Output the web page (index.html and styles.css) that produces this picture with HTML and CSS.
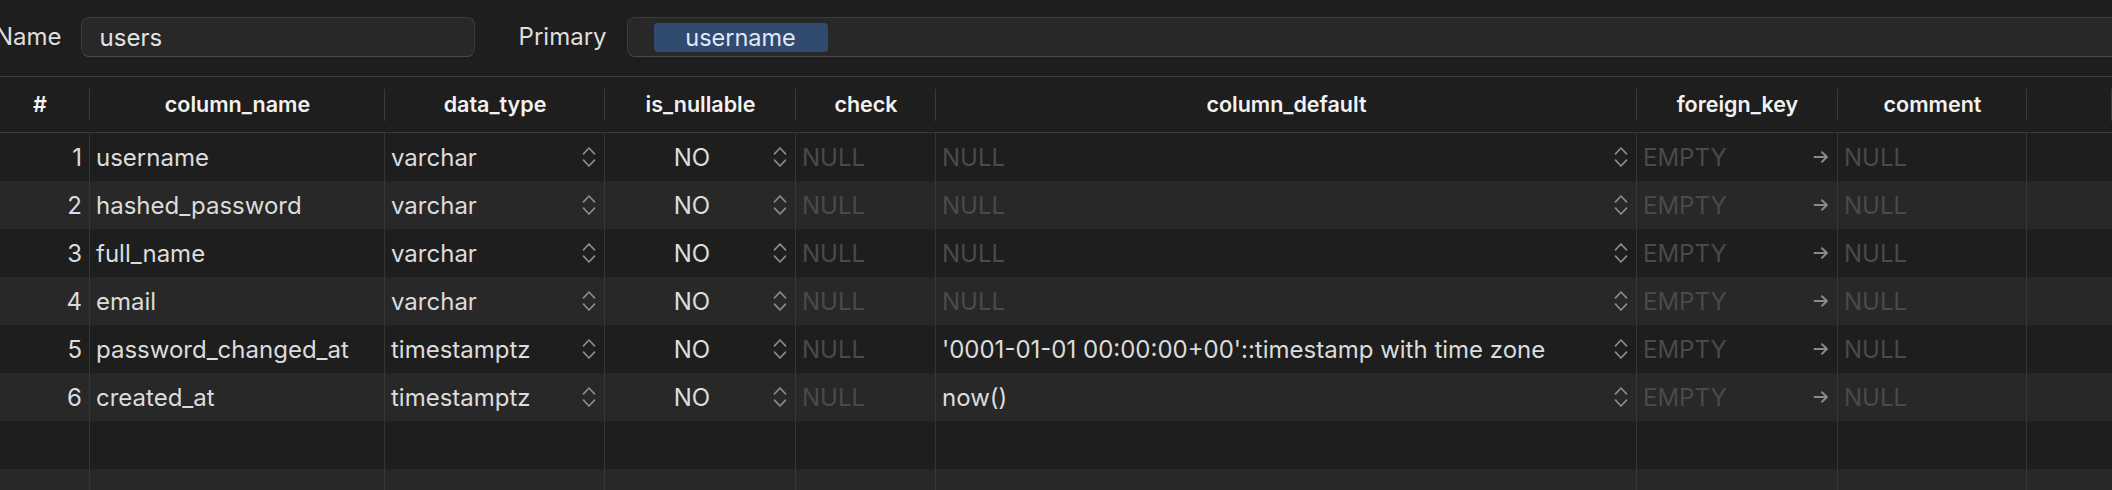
FILE: index.html
```html
<!DOCTYPE html>
<html>
<head>
<meta charset="utf-8">
<link rel="stylesheet" href="styles.css">
</head>
<body>
<div class="topbar">
  <span class="label name-label">Name</span>
  <div class="field name-field">users</div>
  <span class="label primary-label">Primary</span>
  <div class="field primary-field"><span class="chip">username</span></div>
</div>
<div class="grid head">
  <div class="hc hnum">#</div>
  <div class="hc">column_name</div>
  <div class="hc">data_type</div>
  <div class="hc">is_nullable</div>
  <div class="hc">check</div>
  <div class="hc">column_default</div>
  <div class="hc">foreign_key</div>
  <div class="hc">comment</div>
  <div class="hc last"></div>
</div>
<div id="rows"></div>
<svg width="0" height="0" class="defs">
  <defs>
    <symbol id="updown" viewBox="0 0 14 22">
      <path d="M1.5 7.8 L7 2 L12.5 7.8 M1.5 14.2 L7 20 L12.5 14.2" fill="none" stroke="currentColor" stroke-width="1.7" stroke-linecap="round" stroke-linejoin="round"/>
    </symbol>
    <symbol id="arrow" viewBox="0 0 16 14">
      <path d="M1.5 7 H14 M9 2.2 L14 7 L9 11.8" fill="none" stroke="currentColor" stroke-width="1.9" stroke-linecap="round" stroke-linejoin="round"/>
    </symbol>
  </defs>
</svg>
<script src="app.js"></script>
</body>
</html>
```
FILE: app.js
```js
const data = [
  ["username", "varchar", null],
  ["hashed_password", "varchar", null],
  ["full_name", "varchar", null],
  ["email", "varchar", null],
  ["password_changed_at", "timestamptz", "'0001-01-01 00:00:00+00'::timestamp with time zone"],
  ["created_at", "timestamptz", "now()"]
];
const ud = '<svg class="ud"><use href="#updown"/></svg>';
const ar = '<svg class="ar"><use href="#arrow"/></svg>';
let html = '';
data.forEach((r, i) => {
  const def = r[2] === null ? '<span class="txt ph">NULL</span>' : '<span class="txt">' + r[2].replace(/&/g,'&amp;') + '</span>';
  html += '<div class="grid row">' +
    '<div class="c num">' + (i + 1) + '</div>' +
    '<div class="c"><span class="txt">' + r[0] + '</span></div>' +
    '<div class="c"><span class="txt">' + r[1] + '</span>' + ud + '</div>' +
    '<div class="c"><span class="txt center">NO</span>' + ud + '</div>' +
    '<div class="c"><span class="txt ph">NULL</span></div>' +
    '<div class="c">' + def + ud + '</div>' +
    '<div class="c"><span class="txt ph">EMPTY</span>' + ar + '</div>' +
    '<div class="c"><span class="txt ph">NULL</span></div>' +
    '<div class="c last"></div>' +
    '</div>';
});
for (let k = 0; k < 2; k++) {
  html += '<div class="grid row">' + '<div class="c"></div>'.repeat(8) + '<div class="c last"></div></div>';
}
document.getElementById('rows').innerHTML = html;
```
FILE: styles.css
```css
* { box-sizing: border-box; }
html, body {
  margin: 0;
  padding: 0;
  background: #1e1e1e;
  width: 2112px;
  height: 490px;
  overflow: hidden;
}
body {
  font-family: Inter, "Liberation Sans", sans-serif;
  color: #dcdcdc;
}
.defs { position: absolute; }
.topbar {
  height: 77px;
  border-bottom: 1px solid #3a3a3a;
  display: flex;
  align-items: flex-start;
  padding-top: 17px;
  white-space: nowrap;
}
.label {
  font-size: 24px;
  color: #dedede;
  line-height: 40px;
}
.name-label { margin-left: -5px; margin-right: 19px; }
.primary-label { margin-left: 44px; margin-right: 20px; }
.field {
  height: 40px;
  background: #282828;
  border: 1px solid #3b3b3b;
  border-bottom-color: #4a4a4a;
  border-radius: 8px;
  font-size: 24px;
  display: flex;
  align-items: center;
}
.name-field {
  width: 394px;
  padding-left: 18px;
  color: #e4e4e4;
}
.primary-field {
  flex: 1;
  margin-right: -20px;
  padding-left: 26px;
}
.chip {
  height: 29px;
  width: 174px;
  background: #304a70;
  border-radius: 4px;
  color: #e2e8f2;
  display: flex;
  align-items: center;
  justify-content: center;
  font-size: 23.5px;
  margin-top: 1px;
}
.grid {
  display: grid;
  grid-template-columns: 90px 295px 220px 191px 140px 701px 201px 189px 1fr;
}
.head {
  height: 56px;
  border-bottom: 1px solid #3a3a3a;
}
.hc {
  display: flex;
  align-items: center;
  justify-content: center;
  font-size: 21.5px;
  font-weight: 600;
  color: #f2f2f2;
  background: linear-gradient(#3a3a3a, #3a3a3a) right center / 1px 32px no-repeat;
  padding-bottom: 1px;
}
.hnum { padding-right: 10px; }
.row {
  height: 48px;
}
.row:nth-child(even) { background: #282828; }
.c {
  border-right: 1px solid #363636;
  display: flex;
  align-items: center;
  padding: 0 8px 0 6px;
  font-size: 24px;
  white-space: nowrap;
  overflow: hidden;
}
.c.last { border-right: none; }
.num { justify-content: flex-end; padding-right: 7px; }
.txt { flex: 1; color: #dcdcdc; }
.txt.center { text-align: center; }
.txt.ph { color: #4a4a4a; }
.ud {
  width: 14px;
  height: 22px;
  color: #8a8a8a;
  flex: none;
}
.ar {
  width: 16px;
  height: 14px;
  color: #8a8a8a;
  flex: none;
}
```
